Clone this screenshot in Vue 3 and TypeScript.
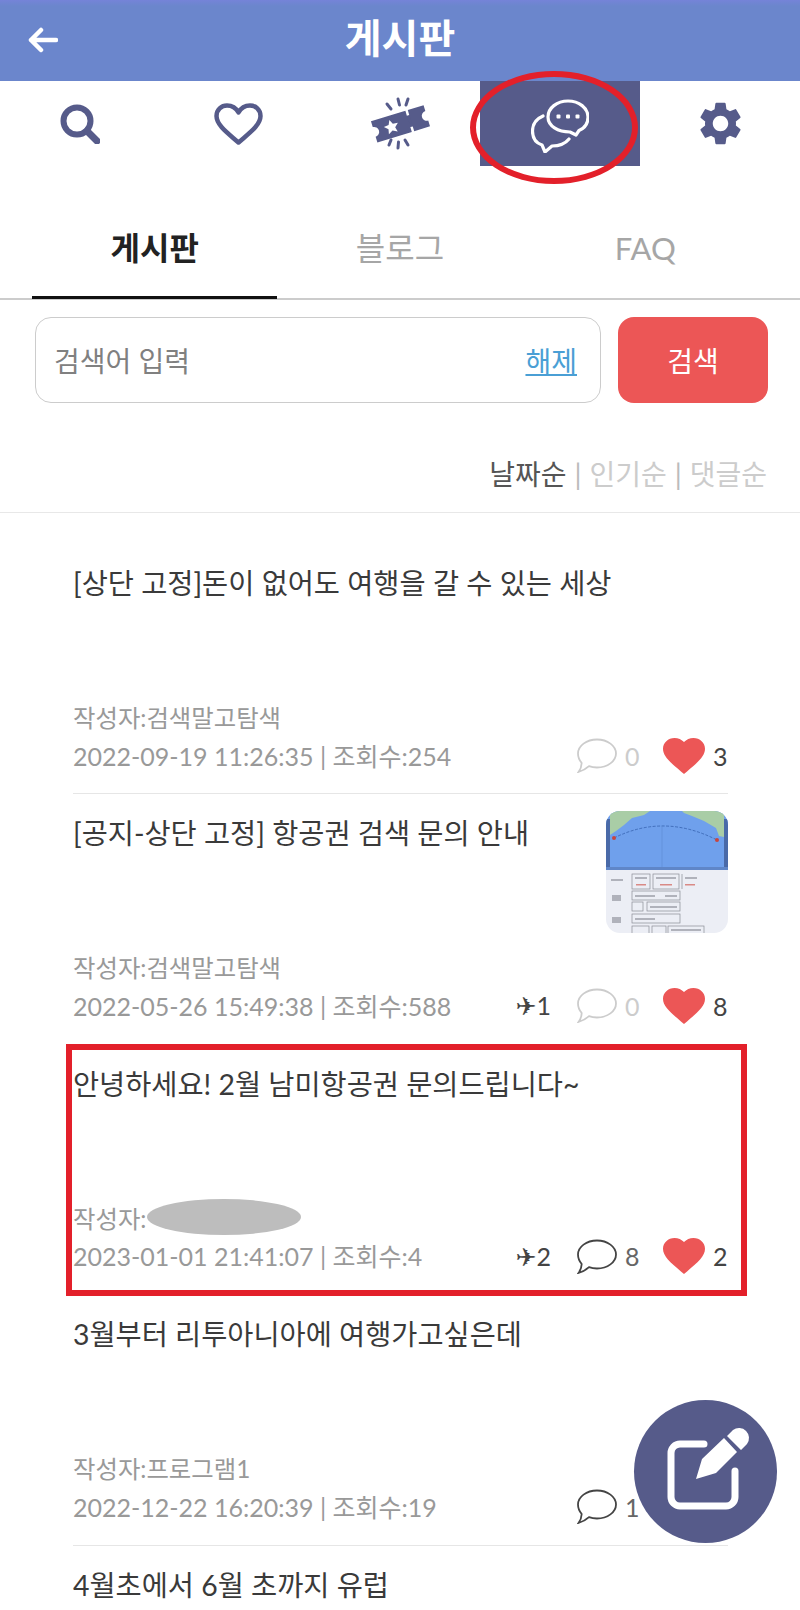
<template>
  <div class="page">
    <header class="topbar">
      <svg class="back" width="30" height="26" viewBox="0 0 30 26" fill="none" stroke="#fff" stroke-width="4.5" stroke-linecap="round" stroke-linejoin="round">
        <path d="M13 3 3 13l10 10M3 13h25" />
      </svg>
      <h1 class="topbar-title">게시판</h1>
    </header>

    <nav class="icon-nav">
      <div class="icon-cell">
        <svg width="40" height="40" viewBox="0 0 40 40" fill="none" stroke="#565b8a" stroke-linecap="round">
          <circle cx="17" cy="17" r="13.5" stroke-width="6" />
          <path d="M27 27l10 10" stroke-width="7" />
        </svg>
      </div>
      <div class="icon-cell icon-cell--heart">
        <svg width="49" height="42" viewBox="0 0 49 42" fill="none" stroke="#565b8a" stroke-width="4.5" stroke-linejoin="round">
          <path d="M24.5 39.5C15 31 2.5 22.5 2.5 13 2.5 6.5 7.5 2.5 13 2.5c5 0 9 2.500 11.500 7 2.500-4.500 6.500-7 11.500-7 5.500 0 10.500 4 10.500 10.500 0 9.500-12.500 18-22 26.500z" />
        </svg>
      </div>
      <div class="icon-cell">
        <svg width="61" height="53" viewBox="0 0 61 53" fill="#565b8a">
          <g transform="rotate(-17 30 27)">
            <path d="M3 16h36v5h2.500v-5H58v6a5 5 0 0 0 0 10v6H41.500v-5H39v5H3v-6a5 5 0 0 0 0-10z" />
            <rect x="39" y="23.500" width="2.500" height="6" />
            <path d="M21 20l2.200 4.700 5.100.5-3.800 3.400 1.100 5-4.600-2.600-4.600 2.600 1.100-5-3.800-3.400 5.100-.5z" fill="#fff" />
          </g>
          <g stroke="#565b8a" stroke-width="3" stroke-linecap="round">
            <path d="M17 7l4 5M28 2l1.500 6M38 2l-2 6M19 48l2-5M28 51l.5-6M38 48l-3-5" />
          </g>
        </svg>
      </div>
      <div class="icon-cell icon-cell--active">
        <svg class="chat" width="58" height="54" viewBox="0 0 58 54" fill="none" stroke="#fff" stroke-width="3.200" stroke-linejoin="round" stroke-linecap="round">
          <path d="M37 2C48 2 57 9 57 18c0 6-3 11-9 13.500L45 36l-6-3C27 33 17 27 17 18 17 9 26 2 37 2z" />
          <path d="M12 17C5 20 1.500 26 1.500 32c0 7 3.500 12 9.500 14l3 7 7-6c7 0 13-2 17-7" />
          <g fill="#fff" stroke="none">
            <rect x="25.500" y="15.500" width="4" height="4" rx="1" />
            <rect x="35" y="15.500" width="4" height="4" rx="1" />
            <rect x="44.500" y="15.500" width="4" height="4" rx="1" />
          </g>
        </svg>
        <div class="circle-mark"></div>
      </div>
      <div class="icon-cell">
        <svg width="41" height="43" viewBox="2.500 2 19 20" fill="#565b8a">
          <path fill-rule="evenodd" d="M19.140 12.940c.04-.3.06-.61.06-.94 0-.32-.02-.64-.07-.94l2.030-1.580c.18-.14.23-.41.12-.61l-1.920-3.320c-.12-.22-.37-.29-.59-.22l-2.390.96c-.5-.38-1.030-.7-1.620-.94l-.36-2.540c-.04-.24-.24-.41-.48-.41h-3.840c-.24 0-.43.17-.47.41l-.36 2.540c-.59.24-1.130.57-1.620.94l-2.390-.96c-.22-.08-.47 0-.59.22L2.740 8.870c-.12.21-.08.47.12.61l2.030 1.580c-.05.3-.09.63-.09.94s.02.64.07.94l-2.030 1.580c-.18.14-.23.41-.12.61l1.920 3.320c.12.22.37.29.59.22l2.390-.96c.5.38 1.030.7 1.620.94l.36 2.540c.05.24.24.41.48.41h3.840c.24 0 .44-.17.47-.41l.36-2.540c.59-.24 1.130-.56 1.620-.94l2.390.96c.22.08.47 0 .59-.22l1.920-3.320c.12-.22.07-.47-.12-.61l-2.010-1.580zM12 15.600c-1.980 0-3.600-1.620-3.600-3.600s1.620-3.600 3.600-3.600 3.600 1.620 3.600 3.600-1.620 3.600-3.600 3.600z" />
        </svg>
      </div>
    </nav>

    <div class="tabs">
      <div class="tab tab--active">게시판</div>
      <div class="tab">블로그</div>
      <div class="tab tab--latin">FAQ</div>
    </div>

    <div class="search">
      <div class="search-box">
        <span class="search-placeholder">검색어 입력</span>
        <a class="search-clear">해제</a>
      </div>
      <button class="search-btn">검색</button>
    </div>

    <div class="sort">
      <span class="sort-on">날짜순</span>
      <span class="sort-sep">|</span>
      <span>인기순</span>
      <span class="sort-sep">|</span>
      <span>댓글순</span>
    </div>

    <ul class="posts">
      <li v-for="(post, i) in posts" :key="i" class="post">
        <div class="post-top">
          <p class="post-title">{{ post.title }}</p>
          <svg v-if="post.thumb" class="thumb" width="122" height="122" viewBox="0 0 122 122">
            <rect width="122" height="122" fill="#eceef5" />
            <rect width="122" height="59" fill="#6fa0ec" />
            <path d="M4 0H44L38 4 26 7 18 14 10 20 4 24z" fill="#a9cda6" />
            <path d="M76 0h42v26l-5-1-3-8-12-7-12-5-8-3z" fill="#a9cda6" />
            <rect x="0" y="8" width="4" height="51" fill="#4a6aa8" />
            <rect x="118" y="8" width="4" height="51" fill="#4a6aa8" />
            <rect x="0" y="56" width="122" height="3" fill="#5f86c8" />
            <path d="M8 27Q58 2 111 29" fill="none" stroke="#2f5aa8" stroke-width=".7" stroke-dasharray="3 1.500" />
            <path d="M56 15v41" stroke="#5a86cc" stroke-width=".5" />
            <circle cx="8" cy="27" r="2" fill="#c8453e" />
            <circle cx="111" cy="29" r="2" fill="#c8453e" />
            <g fill="none" stroke="#8a8c96" stroke-width=".7">
              <rect x="26" y="63" width="18" height="15" />
              <rect x="47" y="63" width="26" height="15" />
              <path d="M76 63v15" />
              <rect x="26" y="80" width="48" height="9" />
              <rect x="26" y="91" width="11" height="9" />
              <rect x="41" y="91" width="33" height="9" />
              <rect x="26" y="103" width="48" height="9" />
              <rect x="26" y="115" width="17" height="9" />
              <rect x="46" y="115" width="14" height="9" />
              <rect x="62" y="115" width="36" height="9" />
            </g>
            <g fill="#b0b2bb">
              <rect x="5" y="68" width="12" height="2" />
              <rect x="6" y="84" width="9" height="6" />
              <rect x="6" y="106" width="9" height="6" />
              <rect x="29" y="66" width="12" height="2" />
              <rect x="50" y="66" width="20" height="2" />
              <rect x="79" y="66" width="12" height="2" />
              <rect x="29" y="84" width="20" height="2" />
              <rect x="59" y="84" width="12" height="2" />
              <rect x="44" y="95" width="27" height="2" />
              <rect x="29" y="107" width="20" height="2" />
              <rect x="65" y="118" width="30" height="2" />
            </g>
            <g fill="#d98a86">
              <rect x="30" y="73" width="10" height="1.500" />
              <rect x="54" y="73" width="12" height="1.500" />
              <rect x="79" y="73" width="10" height="1.500" />
            </g>
          </svg>
        </div>
        <template v-if="post.date">
          <div class="post-author">
            작성자:{{ post.author }}
            <span v-if="post.hidden" class="author-blur"></span>
          </div>
          <div class="post-bottom">
            <span class="post-info">{{ post.date }} | 조회수:{{ post.views }}</span>
            <div class="stats">
              <span v-if="post.planes" class="stat-plane">
                <span class="plane">✈</span>{{ post.planes }}
              </span>
              <span class="stat" :class="{ 'stat--zero': post.comments === 0 }">
                <svg class="bubble" width="40" height="35" viewBox="0 0 40 35" fill="none">
                  <path d="M20 1.500C30.500 1.500 39 7.800 39 15.500S30.500 29.500 20 29.500c-3 0-5.500-.4-8-1.300C9 31 5 33 1.500 34c2-2.500 3-5.500 3.200-9C2.500 22.500 1 19.200 1 15.500 1 7.800 9.500 1.500 20 1.500z" />
                </svg>
                <span class="count">{{ post.comments }}</span>
              </span>
              <span class="stat stat--likes">
                <svg width="42" height="36" viewBox="2 3 20 18.350" preserveAspectRatio="none" fill="#ec5656">
                  <path d="M12 21.350l-1.450-1.320C5.400 15.360 2 12.280 2 8.500 2 5.420 4.420 3 7.500 3c1.740 0 3.410.81 4.500 2.090C13.090 3.810 14.760 3 16.500 3 19.580 3 22 5.420 22 8.500c0 3.780-3.400 6.860-8.550 11.540L12 21.350z" />
                </svg>
                <span class="count count--dark">{{ post.likes }}</span>
              </span>
            </div>
          </div>
        </template>
      </li>
    </ul>

    <div class="red-box"></div>

    <button class="fab">
      <svg width="143" height="143" viewBox="0 0 143 143" fill="none">
        <path d="M70 44H46a9 9 0 0 0-9 9v44a9 9 0 0 0 9 9h46a9 9 0 0 0 9-9V71" stroke="#fff" stroke-width="7" stroke-linecap="round" />
        <path d="M62 79l6-20 22-21 13 14-21 21zM93 36l6-6a10 10 0 0 1 14 14l-6 6z" fill="#fff" />
      </svg>
    </button>
  </div>
</template>

<script setup lang="ts">
interface Post {
  title: string;
  author?: string;
  hidden?: boolean;
  date?: string;
  views?: number;
  planes?: number;
  comments?: number;
  likes?: number;
  thumb?: boolean;
}

const posts: Post[] = [
  {
    title: '[상단 고정]돈이 없어도 여행을 갈 수 있는 세상',
    author: '검색말고탐색',
    date: '2022-09-19 11:26:35',
    views: 254,
    comments: 0,
    likes: 3,
  },
  {
    title: '[공지-상단 고정] 항공권 검색 문의 안내',
    author: '검색말고탐색',
    date: '2022-05-26 15:49:38',
    views: 588,
    planes: 1,
    comments: 0,
    likes: 8,
    thumb: true,
  },
  {
    title: '안녕하세요! 2월 남미항공권 문의드립니다~',
    hidden: true,
    date: '2023-01-01 21:41:07',
    views: 4,
    planes: 2,
    comments: 8,
    likes: 2,
  },
  {
    title: '3월부터 리투아니아에 여행가고싶은데',
    author: '프로그램1',
    date: '2022-12-22 16:20:39',
    views: 19,
    comments: 1,
    likes: 0,
  },
  {
    title: '4월초에서 6월 초까지 유럽',
  },
];
</script>

<style>
body {
  margin: 0;
  background: #fff;
}
</style>

<style scoped>
.page {
  position: relative;
  width: 800px;
  height: 1610px;
  overflow: hidden;
  background: #fff;
  font-family: Lato, "Noto Sans CJK KR", sans-serif;
  color: #333;
}
.topbar {
  position: relative;
  height: 81px;
  box-sizing: border-box;
  padding-bottom: 5px;
  display: flex;
  align-items: center;
  justify-content: center;
  background: linear-gradient(#7583d8 0, #6b86cc 6px);
}
.back {
  position: absolute;
  left: 28px;
  top: 27px;
}
.topbar-title {
  margin: 0;
  font-size: 40px;
  line-height: 50px;
  font-weight: 700;
  color: #fff;
}
.icon-nav {
  display: grid;
  grid-template-columns: repeat(5, 160px);
  height: 85px;
}
.icon-cell {
  position: relative;
  display: flex;
  align-items: center;
  justify-content: center;
}
.icon-cell--heart {
  padding-right: 4px;
}
.icon-cell--active {
  background: #565b8a;
}
.chat {
  margin-top: 5px;
}
.circle-mark {
  position: absolute;
  left: -10px;
  top: -10px;
  width: 168px;
  height: 113px;
  box-sizing: border-box;
  border: 6px solid #e3202a;
  border-radius: 50%;
}
.tabs {
  display: grid;
  grid-template-columns: repeat(3, 1fr);
  height: 134px;
  padding: 0 32px;
  border-bottom: 2px solid #ccc;
  box-sizing: border-box;
}
.tab {
  padding-top: 60px;
  text-align: center;
  font-size: 32px;
  line-height: 44px;
  color: #a6a6a6;
}
.tab--latin {
  font-size: 31px;
}
.tab--active {
  font-weight: 700;
  color: #222;
  border-bottom: 3px solid #111;
  height: 133px;
  box-sizing: border-box;
}
.search {
  display: flex;
  gap: 17px;
  padding: 17px 32px 0 35px;
}
.search-box {
  flex: 1;
  height: 86px;
  box-sizing: border-box;
  display: flex;
  align-items: center;
  justify-content: space-between;
  padding: 0 23px 0 18px;
  border: 1px solid #ccc;
  border-radius: 16px;
  font-size: 28px;
}
.search-placeholder {
  color: #808080;
}
.search-clear {
  color: #4a9fd5;
  text-decoration: underline;
}
.search-btn {
  width: 150px;
  height: 86px;
  border: 0;
  border-radius: 16px;
  background: #ec5656;
  color: #fff;
  font: inherit;
  font-size: 28px;
}
.sort {
  display: flex;
  justify-content: flex-end;
  gap: 8px;
  height: 110px;
  box-sizing: border-box;
  padding: 52px 33px 0 0;
  border-bottom: 1px solid #e8e8e8;
  font-size: 28px;
  line-height: 38px;
  color: #ccc;
}
.sort-on {
  color: #555;
}
.sort-sep {
  color: #bbb;
}
.posts {
  list-style: none;
  margin: 0;
  padding: 31px 72px 0 73px;
}
.post {
  padding: 17px 0;
  height: 250.4px;
  box-sizing: border-box;
  border-bottom: 1px solid #e6e6e6;
}
.post-top {
  display: flex;
  justify-content: space-between;
  height: 122px;
}
.post-title {
  margin: 0;
  font-size: 28.4px;
  line-height: 44px;
  color: #3a3a3a;
}
.thumb {
  flex: none;
  border-radius: 14px;
  filter: blur(0.4px);
}
.post-author {
  position: relative;
  margin-top: 15px;
  font-size: 24.4px;
  line-height: 39px;
  color: #999;
}
.author-blur {
  position: absolute;
  left: 74px;
  top: 0;
  width: 154px;
  height: 36px;
  border-radius: 50%;
  background: #bdbdbd;
}
.post-bottom {
  display: flex;
  justify-content: space-between;
  align-items: center;
  height: 39px;
  margin-top: -1px;
}
.post-info {
  margin-top: -2px;
  font-size: 25px;
  color: #999;
}
.stats {
  display: flex;
  align-items: center;
}
.stat-plane {
  margin-right: 26px;
  font-size: 25px;
  color: #444;
}
.plane {
  font-family: "DejaVu Sans", sans-serif;
  font-size: 25px;
}
.stat {
  display: flex;
  align-items: center;
  gap: 8px;
  font-size: 25px;
}
.stat--likes {
  margin-left: 23px;
}
.bubble {
  stroke: #444;
  stroke-width: 1.8;
}
.stat--zero .bubble {
  stroke: #ccc;
}
.count {
  width: 15px;
  color: #666;
}
.stat--zero .count {
  color: #ccc;
}
.count--dark {
  color: #444;
}
.red-box {
  position: absolute;
  left: 66px;
  top: 1044px;
  width: 681px;
  height: 252px;
  box-sizing: border-box;
  border: 6px solid #e3202a;
}
.fab {
  position: absolute;
  left: 634px;
  top: 1400px;
  width: 143px;
  height: 143px;
  padding: 0;
  border: 0;
  border-radius: 50%;
  background: #565b8a;
}
.fab svg {
  display: block;
}
</style>
